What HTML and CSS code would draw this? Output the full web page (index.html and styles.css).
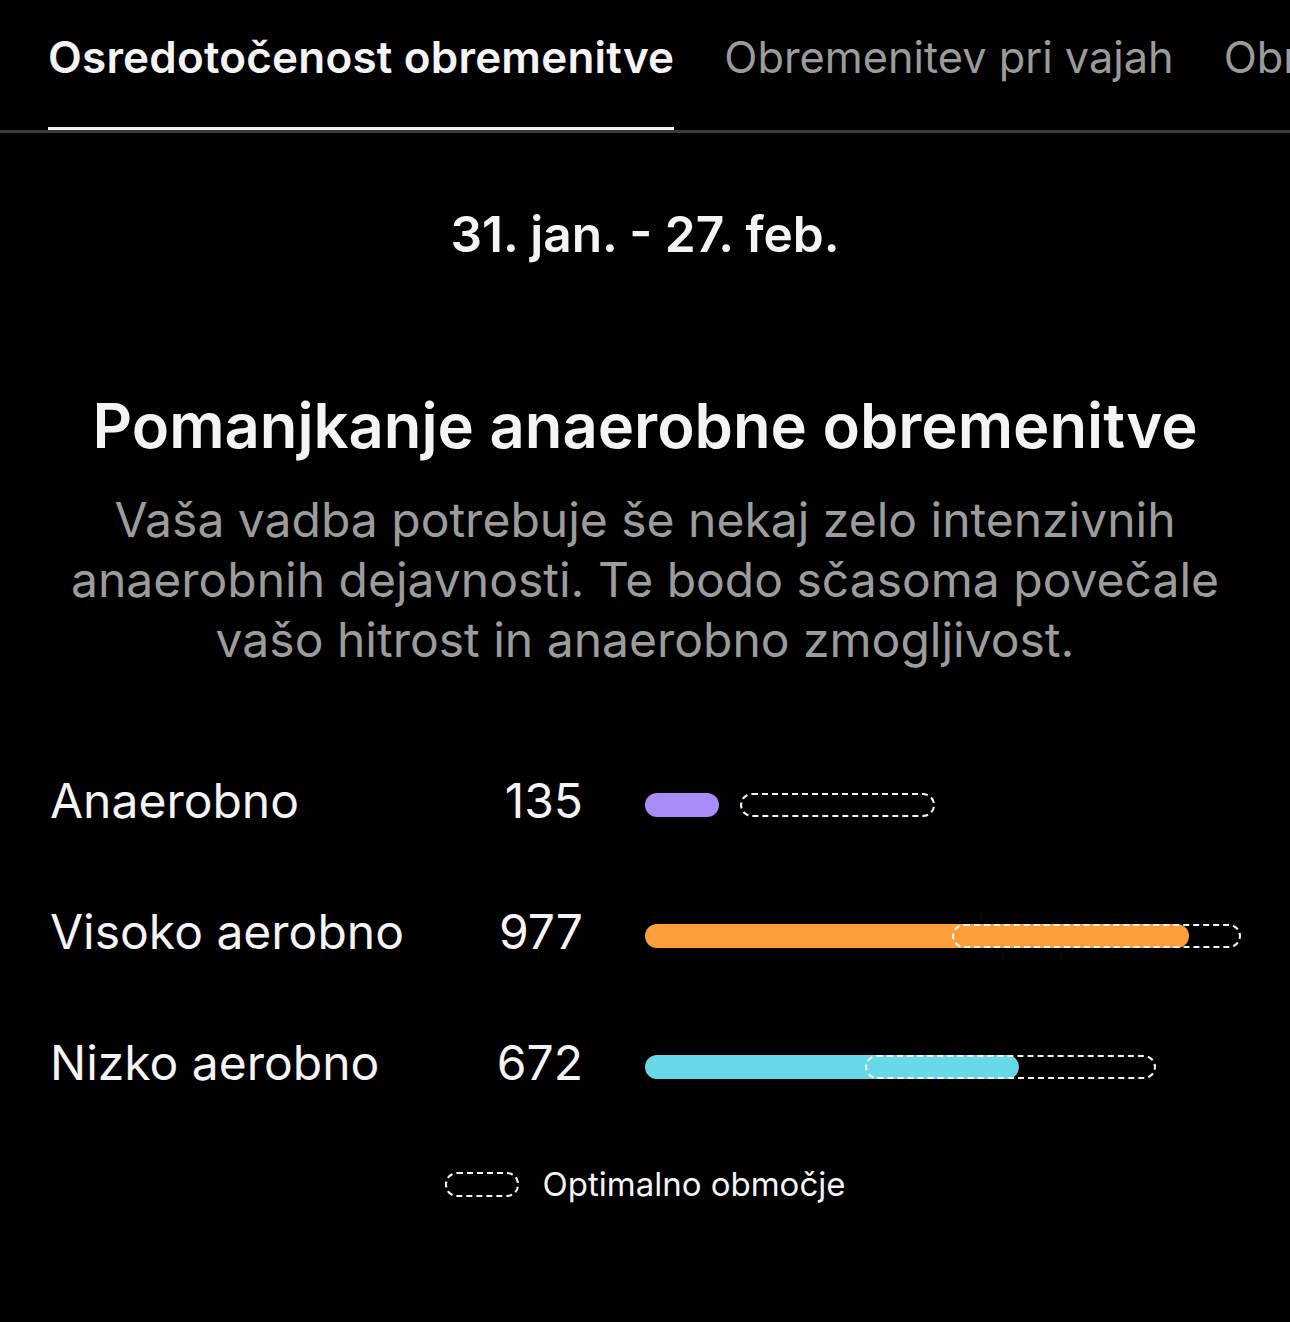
FILE: index.html
```html
<!DOCTYPE html>
<html lang="sl">
<head>
    <meta charset="UTF-8">
    <meta name="viewport" content="width=device-width, initial-scale=1.0">
    <title>Osredotočenost obremenitve</title>
    <link rel="stylesheet" href="styles.css">
</head>
<body>
    <nav class="tabs">
        <a class="tab active" href="#">Osredotočenost obremenitve</a>
        <a class="tab" href="#">Obremenitev pri vajah</a>
        <a class="tab" href="#">Obremenitev in okrevanje</a>
    </nav>

    <main class="focus">
        <p class="range">31. jan. - 27. feb.</p>

        <h1 class="status-title">Pomanjkanje anaerobne obremenitve</h1>
        <p class="status-text">Vaša vadba potrebuje še nekaj zelo intenzivnih anaerobnih dejavnosti. Te bodo sčasoma povečale vašo hitrost in anaerobno zmogljivost.</p>

        <div class="load-list">
            <div class="load-row">
                <span class="load-name">Anaerobno</span>
                <span class="load-value">135</span>
                <div class="track">
                    <div class="fill anaerobic" style="width: 74px;"></div>
                    <div class="optimal" style="left: 95px; width: 195px;"></div>
                </div>
            </div>
            <div class="load-row">
                <span class="load-name">Visoko aerobno</span>
                <span class="load-value">977</span>
                <div class="track">
                    <div class="fill high" style="width: 544px;"></div>
                    <div class="optimal" style="left: 307px; width: 289px;"></div>
                </div>
            </div>
            <div class="load-row">
                <span class="load-name">Nizko aerobno</span>
                <span class="load-value">672</span>
                <div class="track">
                    <div class="fill low" style="width: 374px;"></div>
                    <div class="optimal" style="left: 220px; width: 291px;"></div>
                </div>
            </div>
        </div>

        <div class="legend">
            <span class="legend-box"></span>
            <span>Optimalno območje</span>
        </div>
    </main>
</body>
</html>
```

FILE: styles.css
```css
body {
    margin: 0;
    background-color: #000;
    color: #f4f4f4;
    font-family: Inter, "Noto Sans", sans-serif;
    overflow: hidden;
}

/* tab bar, last tab runs off the edge */
.tabs {
    display: flex;
    gap: 50px;
    padding-left: 48px;
    border-bottom: 3px solid #3b3b3b;
    white-space: nowrap;
    overflow: hidden;
}
.tab {
    padding: 31px 0 44px;
    font-size: 43.3px;
    line-height: 52px;
    color: #9b9b9b;
    text-decoration: none;
    border-bottom: 3px solid transparent;
}
.tab.active {
    color: #f4f4f4;
    font-size: 44px;
    font-weight: 600;
    letter-spacing: 0.2px;
    border-bottom-color: #f4f4f4;
}

.focus {
    display: flex;
    flex-direction: column;
    align-items: center;
    text-align: center;
}
.range {
    margin: 72px 0 0;
    font-size: 49.6px;
    line-height: 58px;
    font-weight: 600;
}
.status-title {
    margin: 126px 0 0;
    font-size: 61.5px;
    line-height: 74px;
    font-weight: 600;
}
.status-text {
    margin: 27px 0 0;
    max-width: 1180px;
    font-size: 48px;
    line-height: 60px;
    color: #9c9c9c;
}

.load-list {
    align-self: stretch;
    display: flex;
    flex-direction: column;
    gap: 73px;
    margin-top: 102px;
    padding: 0 50px;
    text-align: left;
}
.load-row {
    display: grid;
    grid-template-columns: 400px 133px 1fr;
    align-items: center;
    font-size: 48px;
    line-height: 58px;
}
.load-value {
    text-align: right;
}
.track {
    position: relative;
    height: 24px;
    margin: 7px 0 0 62px;
}
.fill {
    height: 24px;
    border-radius: 12px;
}
.fill.anaerobic { background-color: #a78cfa; }
.fill.high { background-color: #fd9e3c; }
.fill.low { background-color: #66d8e8; }
.optimal {
    position: absolute;
    top: 0;
    height: 24px;
    box-sizing: border-box;
    border: 2px dashed #f4f4f4;
    border-radius: 12px;
}

.legend {
    display: flex;
    align-items: center;
    gap: 24px;
    margin-top: 72px;
    font-size: 33px;
    line-height: 40px;
}
.legend-box {
    width: 74px;
    height: 25px;
    box-sizing: border-box;
    border: 2px dashed #f4f4f4;
    border-radius: 12px;
}
```
